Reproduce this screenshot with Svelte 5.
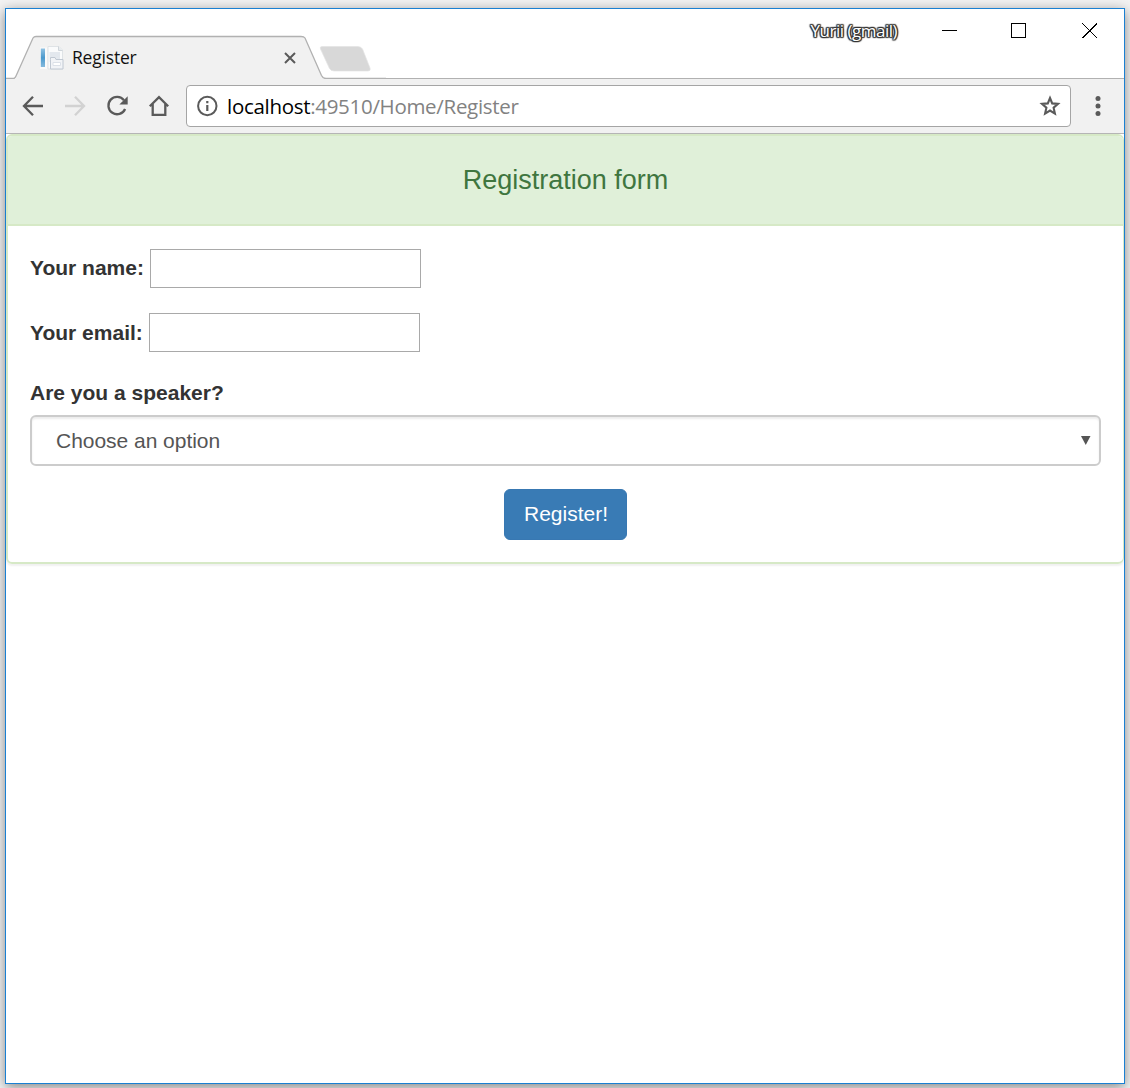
<script lang="ts">
  let name = $state('');
  let email = $state('');
  let speaker = $state('');
</script>

<div class="desktop">
  <div class="window">
    <header class="titlebar">
      <svg class="tabs" viewBox="0 0 380 70" width="380" height="70" aria-hidden="true">
        <path d="M0 69.5H7.5Q9 69.5 10 67L27 29Q28 27 30 27H295Q298 27 299 29L315.500 66.500Q317 69.500 320 69.500H380V70H0Z" fill="#f1f1f1" />
        <path d="M0 69.5H7.500Q9 69.500 10 67L27 29Q28 27.500 30 27.500H295Q298 27.500 299 29L315.500 66.500Q317 69.500 320 69.500H380" fill="none" stroke="#b1b1b1" stroke-width="1.300" />
        <path d="M9 69.500H316" stroke="#f1f1f1" />
        <path d="M316 37.500H352Q355 37.500 356.500 40L364 59Q365 62 362 62H328Q325 62 323.500 59.500L314.500 40Q313.500 37.500 316 37.500Z" fill="#d8d8d8" stroke="#e4e4e4" stroke-width=".7" />
      </svg>
      <div class="tab">
        <svg class="favicon" width="24" height="24" viewBox="0 0 24 24" aria-hidden="true">
          <defs>
            <linearGradient id="spine" x2="0" y2="1">
              <stop offset="0" stop-color="#8fc1e2" />
              <stop offset=".5" stop-color="#4a99cd" />
              <stop offset="1" stop-color="#85bade" />
            </linearGradient>
          </defs>
          <path d="M0 1.500H7V23H0Z" fill="#fafafa" />
          <path d="M.800 2.500H5V21H.800Z" fill="url(#spine)" />
          <path d="M8 .500H19L22.500 4V23H8Z" fill="#fafbfc" stroke="#dfe3e6" />
          <path d="M18.500 .500V4.500H22.500" fill="#e7ebee" stroke="#cfd5da" />
          <path d="M9.500 6H20V16H9.500Z" fill="#e3e8ee" />
          <path d="M10.500 13.500V11.500H15L16 13.500H23V23H10.500Z" fill="#f2f4f7" stroke="#c0c8d2" />
          <path d="M13 16.500H20.500V19.500H13Z" fill="#fff" stroke="#dce1e8" />
        </svg>
        <span class="tab-title">Register</span>
        <svg class="tab-close" width="12" height="12" viewBox="0 0 12 12" aria-hidden="true">
          <path d="M1 1L11 11M11 1L1 11" stroke="#5a5a5a" stroke-width="2" />
        </svg>
      </div>
      <div class="controls">
        <span class="user">Yurii (gmail)</span>
        <svg width="148" height="16" viewBox="0 0 148 16" fill="none" stroke="#000" shape-rendering="crispEdges" aria-hidden="true">
          <path d="M0 7.500H15M69.500 .500H83.500V14.500H69.500Z" />
          <path d="M140.500 .500L155 15M155 .500L140.500 15" />
        </svg>
      </div>
    </header>

    <nav class="toolbar">
      <svg class="nav-icons" width="180" height="54" viewBox="0 0 180 54" fill="none" stroke="#5a5a5a" stroke-width="2.300" aria-hidden="true">
        <path d="M37 27H18.500M27 17.800L18 27L27 36.200" />
        <path d="M59 27H77.500M69 17.800L78 27L69 36.200" stroke="#d2d2d2" />
        <path d="M118 21.200A8.700 8.700 0 1 0 119.100 30" />
        <path d="M121.700 17.200V25.500H113.400Z" fill="#5a5a5a" stroke="none" />
        <path d="M143.800 27.200L153 18.200L162.200 27.200M146.700 25V35.800H159.300V25" />
      </svg>
      <div class="address">
        <svg width="22" height="22" viewBox="0 0 22 22" fill="none" stroke="#5a5a5a" stroke-width="2" aria-hidden="true">
          <circle cx="11.300" cy="11" r="9.200" />
          <path d="M11.300 10V16M11.300 6V8.200" stroke-width="2.200" />
        </svg>
        <span class="url"><b>localhost</b>:49510/Home/Register</span>
        <svg class="star" width="22" height="22" viewBox="0 0 22 22" fill="none" stroke="#5a5a5a" stroke-width="2.100" aria-hidden="true">
          <path d="M11 3L13.200 8.400L19 8.900L14.600 12.700L15.900 18.600L11 15.500L6.100 18.600L7.400 12.700L3 8.900L8.800 8.400Z" />
        </svg>
      </div>
      <svg class="menu" width="6" height="20" viewBox="0 0 6 20" fill="#5a5a5a" aria-hidden="true">
        <circle cx="3" cy="2.500" r="2.500" />
        <circle cx="3" cy="10" r="2.500" />
        <circle cx="3" cy="17.500" r="2.500" />
      </svg>
    </nav>

    <main>
      <form class="panel" onsubmit={(e) => e.preventDefault()}>
        <h3>Registration form</h3>
        <div class="body">
          <div class="row">
            <label class="l-name" for="name">Your name:</label>
            <input id="name" bind:value={name} />
          </div>
          <div class="row">
            <label class="l-email" for="email">Your email:</label>
            <input id="email" bind:value={email} />
          </div>
          <label class="l-speaker" for="speaker">Are you a speaker?</label>
          <div class="select">
            <select id="speaker" bind:value={speaker}>
              <option value="">Choose an option</option>
            </select>
            <svg width="10" height="9" viewBox="0 0 10 9" aria-hidden="true">
              <path d="M0 0H9.500L4.750 9Z" fill="#555" />
            </svg>
          </div>
          <button type="submit">Register!</button>
        </div>
      </form>
    </main>
  </div>
</div>

<style>
  :global(body) {
    margin: 0;
    background: #f3f3f3;
  }
  .desktop {
    box-sizing: border-box;
    width: 1130px;
    height: 1088px;
    padding: 8px 5px 4px;
    overflow: hidden;
    font-family: 'Liberation Sans', Arial, sans-serif;
  }
  .window {
    box-sizing: border-box;
    height: 1076px;
    border: 1px solid #1a80d2;
    background: #fff;
    box-shadow: 0 3px 12px rgba(0, 0, 0, 0.45);
  }
  .titlebar {
    position: relative;
    box-sizing: border-box;
    display: flex;
    justify-content: space-between;
    height: 70px;
    border-bottom: 1px solid #b1b1b1;
  }
  .tabs {
    position: absolute;
    left: 0;
    top: 0;
  }
  .tab {
    position: relative;
    display: flex;
    align-items: center;
    width: 256px;
    height: 42px;
    padding: 28px 0 0 34px;
  }
  .tab-title {
    flex: 1;
    margin: -2px 0 0 8px;
    font: 17.5px 'Open Sans', 'Noto Sans', sans-serif;
    letter-spacing: -0.2px;
    color: #111;
  }
  .controls {
    display: flex;
    align-items: flex-start;
    padding-top: 14px;
    margin-right: 34px;
  }
  .controls svg {
    overflow: visible;
    margin-left: 45px;
  }
  .user {
    margin-top: -4px;
    font: 17px/24px 'Open Sans', 'Noto Sans', sans-serif;
    letter-spacing: -0.5px;
    color: #fff;
    text-shadow: 0 0 1px #333, 1px 0 1px #333, -1px 0 1px #333, 0 1px 1px #333, 0 -1px 1px #333,
      1px 1px 1px #444, -1px -1px 1px #444, 1px -1px 1px #444, -1px 1px 1px #444;
  }
  .toolbar {
    box-sizing: border-box;
    display: flex;
    align-items: center;
    height: 55px;
    background: #f1f1f1;
    border-bottom: 1px solid #b5b5b5;
  }
  .address {
    box-sizing: border-box;
    display: flex;
    align-items: center;
    width: 885px;
    height: 42px;
    padding: 0 9px;
    border: 1px solid #a5a5a5;
    border-radius: 4px;
    background: #fff;
  }
  .url {
    flex: 1;
    margin-left: 9px;
    font: 20.500px 'Open Sans', 'Noto Sans', sans-serif;
    letter-spacing: -0.3px;
    color: #828282;
  }
  .url b {
    font-weight: 400;
    color: #000;
  }
  .menu {
    margin-left: 24px;
  }
  .panel {
    box-sizing: border-box;
    height: 430px;
    border: solid #d6e9c6;
    border-width: 2px 1px 2px 2px;
    border-radius: 6px;
    box-shadow: 0 2px 2px rgba(0, 0, 0, 0.06);
    overflow: hidden;
  }
  h3 {
    box-sizing: border-box;
    height: 90px;
    margin: 0;
    border-bottom: 2px solid #d6e9c6;
    background: #e0f0d9;
    color: #3f763f;
    font-size: 27px;
    line-height: 88px;
    font-weight: 400;
    text-align: center;
  }
  .body {
    display: flex;
    flex-direction: column;
    padding: 23px 22px 0;
  }
  .row {
    display: flex;
    align-items: center;
    gap: 6px;
    height: 39px;
    margin-bottom: 25px;
  }
  label {
    color: #333;
    font-size: 21px;
    font-weight: 700;
    line-height: 30px;
    white-space: nowrap;
  }
  .l-name {
    margin-top: -2px;
  }
  .l-speaker {
    padding-top: 1px;
  }
  input {
    box-sizing: border-box;
    width: 271px;
    height: 39px;
    padding: 2px 6px;
    border: 1px solid #a9a9a9;
    font: 20px 'Liberation Sans', Arial, sans-serif;
  }
  .select {
    display: flex;
    align-items: center;
    margin-top: 7px;
    box-sizing: border-box;
    height: 51px;
    padding: 0 8px 0 24px;
    border: 2px solid #ccc;
    border-radius: 6px;
    box-shadow: inset 0 2px 2px rgba(0, 0, 0, 0.075);
  }
  select {
    flex: 1;
    appearance: none;
    padding: 0;
    border: 0;
    background: none;
    color: #555;
    font: 21px 'Liberation Sans', Arial, sans-serif;
    letter-spacing: -0.03px;
  }
  button {
    align-self: center;
    width: 123px;
    height: 51px;
    margin-top: 23px;
    padding: 0 0 2px 1px;
    border: 1px solid #3878b2;
    border-radius: 6px;
    background: #397bb5;
    color: #fff;
    font: 21px 'Liberation Sans', Arial, sans-serif;
  }
</style>
